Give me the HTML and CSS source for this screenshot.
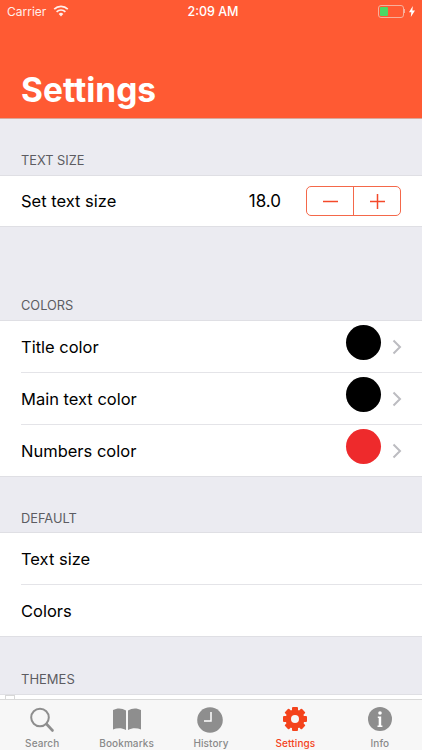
FILE: index.html
```html
<!DOCTYPE html>
<html>
<head>
  <title>Settings</title>
  <link rel="stylesheet" href="styles.css">
</head>
<body>
  <div class="screen">
    <div class="header">
      <div class="status">
        <div class="status-left">
          <span>Carrier</span>
          <svg class="wifi" width="16" height="12" viewBox="0 0 16 12">
            <path d="M8 11.500 5.700 8.900a3.400 3.400 0 0 1 4.600 0z" fill="#fff"/>
            <path d="M3.600 6.800a6.300 6.300 0 0 1 8.800 0" fill="none" stroke="#fff" stroke-width="1.700"/>
            <path d="M1.200 4.200a9.800 9.800 0 0 1 13.600 0" fill="none" stroke="#fff" stroke-width="1.700"/>
          </svg>
        </div>
        <div class="status-time">2:09 AM</div>
        <div class="status-right">
          <div class="battery"><div class="battery-level"></div></div>
          <div class="battery-tip"></div>
          <svg width="6" height="11" viewBox="0 0 6 11"><path d="M3.800 0 0 6.200h2.300L1.800 11 6 4.500H3.400z" fill="#fff"/></svg>
        </div>
      </div>
      <h1>Settings</h1>
    </div>

    <div class="content">
      <div class="section-title first">TEXT SIZE</div>
      <div class="group">
        <div class="row row-short">
          <span class="row-label">Set text size</span>
          <span class="size-value">18.0</span>
          <div class="stepper">
            <div class="step">
              <svg width="17" height="17" viewBox="0 0 17 17"><path d="M1 8.500h15" stroke="#f4492a" stroke-width="1.500"/></svg>
            </div>
            <div class="step step-right">
              <svg width="17" height="17" viewBox="0 0 17 17"><path d="M1 8.500h15M8.500 1v15" stroke="#f4492a" stroke-width="1.500"/></svg>
            </div>
          </div>
        </div>
      </div>

      <div class="section-title tall">COLORS</div>
      <div class="group">
        <div class="row">
          <span class="row-label">Title color</span>
          <span class="swatch black"></span>
          <svg class="chevron" width="10" height="16" viewBox="0 0 10 16"><path d="M1.500 1.500 8 8l-6.500 6.500" fill="none" stroke="#bcbcc1" stroke-width="2"/></svg>
        </div>
        <div class="row">
          <span class="row-label">Main text color</span>
          <span class="swatch black"></span>
          <svg class="chevron" width="10" height="16" viewBox="0 0 10 16"><path d="M1.500 1.500 8 8l-6.500 6.500" fill="none" stroke="#bcbcc1" stroke-width="2"/></svg>
        </div>
        <div class="row">
          <span class="row-label">Numbers color</span>
          <span class="swatch red"></span>
          <svg class="chevron" width="10" height="16" viewBox="0 0 10 16"><path d="M1.500 1.500 8 8l-6.500 6.500" fill="none" stroke="#bcbcc1" stroke-width="2"/></svg>
        </div>
      </div>

      <div class="section-title">DEFAULT</div>
      <div class="group">
        <div class="row"><span class="row-label">Text size</span></div>
        <div class="row"><span class="row-label">Colors</span></div>
      </div>

      <div class="section-title themes">THEMES</div>
      <div class="group group-cut"><div class="theme-box"></div></div>
    </div>

    <div class="tabbar">
      <div class="tab">
        <svg width="30" height="26" viewBox="0 0 30 26"><circle cx="13" cy="10.500" r="8.800" fill="none" stroke="#8e8e8e" stroke-width="2"/><path d="M19.500 17 25.500 23.500" stroke="#8e8e8e" stroke-width="2.600" stroke-linecap="round"/></svg>
        <span>Search</span>
      </div>
      <div class="tab">
        <svg width="30" height="26" viewBox="0 0 30 26"><path d="M1 3C5 .8 10 .8 14 3.500V23c-4-2.300-9-2.300-13-.5zM29 3C25 .8 20 .8 16 3.500V23c4-2.300 9-2.300 13-.5z" fill="#8e8e8e"/></svg>
        <span>Bookmarks</span>
      </div>
      <div class="tab">
        <svg width="30" height="26" viewBox="0 0 30 26"><circle cx="14" cy="13" r="12.800" fill="#8e8e8e"/><path d="M15 5v9H8" fill="none" stroke="#fff" stroke-width="1.500"/></svg>
        <span>History</span>
      </div>
      <div class="tab tab-active">
        <svg width="30" height="26" viewBox="0 0 30 26">
          <g fill="#f4431c">
            <circle cx="15" cy="12" r="9.500"/>
            <rect x="12" y="0" width="6" height="24" rx="1"/>
            <rect x="12" y="0" width="6" height="24" rx="1" transform="rotate(45 15 12)"/>
            <rect x="12" y="0" width="6" height="24" rx="1" transform="rotate(90 15 12)"/>
            <rect x="12" y="0" width="6" height="24" rx="1" transform="rotate(135 15 12)"/>
          </g>
          <circle cx="15" cy="12" r="4" fill="#f7f7f7"/>
        </svg>
        <span>Settings</span>
      </div>
      <div class="tab">
        <svg width="30" height="26" viewBox="0 0 30 26"><circle cx="15" cy="12" r="12" fill="#8e8e8e"/><circle cx="15" cy="6" r="1.800" fill="#fff"/><path d="M12.800 9.500h3.400v9h1.200V20h-4.900v-1.500h1.200v-7.500h-.9z" fill="#fff"/></svg>
        <span>Info</span>
      </div>
    </div>
  </div>
</body>
</html>
```

FILE: styles.css
```css
html, body {
  margin: 0;
  padding: 0;
}

body {
  font-family: "Inter", "Liberation Sans", sans-serif;
  background-color: #ebebf1;
}

.screen {
  display: flex;
  flex-direction: column;
  width: 422px;
  height: 750px;
  overflow: hidden;
}

/* header */
.header {
  flex: none;
  height: 118px;
  background-color: #ff5a33;
  border-bottom: 1px solid #d9a79b;
  color: #fff;
}

.status {
  display: flex;
  justify-content: space-between;
  align-items: center;
  height: 22px;
  padding: 0 7px;
  font-size: 12.5px;
}

.status-left {
  display: flex;
  align-items: center;
  gap: 7px;
  width: 122px;
  font-size: 12px;
  opacity: 0.9;
}

.status-time {
  font-weight: 500;
}

.status-right {
  display: flex;
  align-items: center;
  justify-content: flex-end;
  width: 118px;
}

.battery {
  width: 22px;
  height: 9px;
  padding: 1px;
  border: 1px solid #f7b09c;
  border-radius: 3px;
}

.battery-level {
  width: 8px;
  height: 9px;
  border-radius: 1px;
  background-color: #4cd964;
}

.battery-tip {
  width: 1px;
  height: 4px;
  margin-right: 4px;
  background-color: #f7b09c;
}

.header h1 {
  margin: 48px 0 0 21px;
  font-size: 33.5px;
  line-height: 41px;
  font-weight: 700;
}

/* list */
.content {
  flex: 1;
  overflow: hidden;
}

.section-title {
  padding: 34px 21px 5px;
  font-size: 12.800px;
  line-height: 16px;
  color: #5c5c62;
}

.section-title.first {
  padding-top: 34px;
  padding-bottom: 6px;
}

.section-title.tall {
  padding-top: 71px;
  padding-bottom: 6px;
}

.section-title.themes {
  padding-top: 34px;
  padding-bottom: 7px;
  font-size: 13px;
}

.group {
  background-color: #fff;
  border-top: 1px solid #dfdfe4;
  border-bottom: 1px solid #dfdfe4;
}

.row {
  display: flex;
  align-items: center;
  height: 51px;
  margin-left: 21px;
  padding-right: 21px;
  border-bottom: 1px solid #e4e4e8;
  font-size: 16.5px;
  color: #000;
}

.row:last-child {
  border-bottom: none;
}

.row-short {
  height: 50px;
}

.row-label {
  flex: 1;
}

.size-value {
  margin-right: 25px;
  font-size: 17px;
}

.stepper {
  display: flex;
  width: 93px;
  height: 28px;
  border: 1px solid #f4684a;
  border-radius: 5px;
}

.step {
  flex: 1;
  display: flex;
  align-items: center;
  justify-content: center;
}

.step-right {
  border-left: 1px solid #f4684a;
}

.swatch {
  width: 35px;
  height: 35px;
  margin-right: 11px;
  margin-bottom: 8px;
  border-radius: 50%;
}

.black {
  background-color: #000;
}

.red {
  background-color: #ee2a2c;
}

.chevron {
  margin-right: -1px;
}

.group-cut {
  height: 20px;
  border-bottom: none;
}

.theme-box {
  width: 8px;
  height: 3px;
  margin-left: 5px;
  border: 1px solid #d8d8d8;
  border-bottom: none;
}

/* tab bar */
.tabbar {
  flex: none;
  display: flex;
  height: 50px;
  background-color: #f7f7f7;
  border-top: 1px solid #d9d9d9;
}

.tab {
  flex: 1;
  display: flex;
  flex-direction: column;
  align-items: center;
  justify-content: flex-end;
  gap: 4px;
  font-size: 10px;
  font-weight: 500;
  line-height: 13px;
  letter-spacing: 0.1px;
  color: #8a8a8a;
}

.tab-active {
  color: #f4431c;
}
```
